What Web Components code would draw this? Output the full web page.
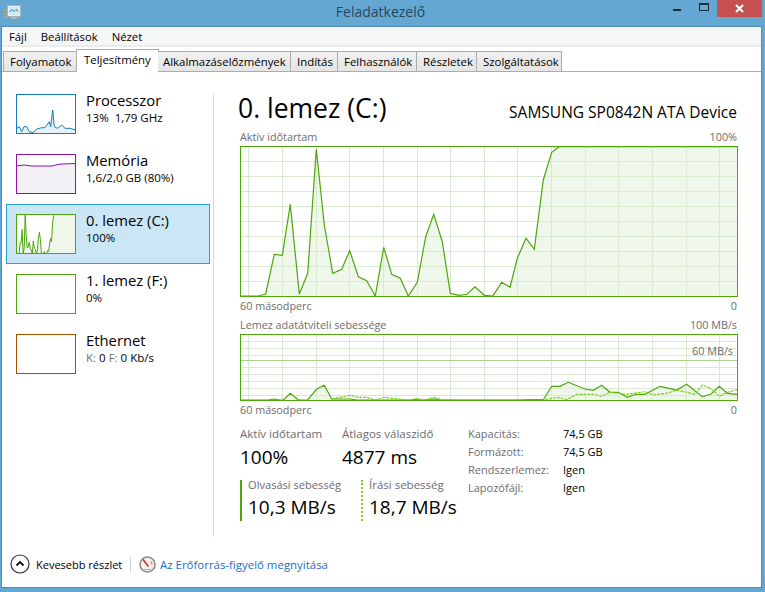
<!DOCTYPE html>
<html lang="hu">
<head>
<meta charset="utf-8">
<title>Feladatkezelő</title>
<style>
  html, body { margin: 0; height: 100%; background: #65a7d3; }
  body { font-family: "Open Sans", "Noto Sans", sans-serif; font-size: 12px; overflow: hidden; }
</style>
</head>
<body>
<tm-window>
  <tm-titlebar slot="title">Feladatkezelő</tm-titlebar>
  <tm-menu slot="menu"><span>Fájl</span><span>Beállítások</span><span>Nézet</span></tm-menu>
  <tm-tabs slot="tabs">
    <tm-tab w="74" pad="6">Folyamatok</tm-tab>
    <tm-tab w="83" pad="7" selected>Teljesítmény</tm-tab>
    <tm-tab w="133" pad="5">Alkalmazáselőzmények</tm-tab>
    <tm-tab w="47">Indítás</tm-tab>
    <tm-tab w="79">Felhasználók</tm-tab>
    <tm-tab w="60">Részletek</tm-tab>
    <tm-tab w="85">Szolgáltatások</tm-tab>
  </tm-tabs>
  <tm-sidebar slot="side">
    <tm-res kind="cpu" name="Processzor">13%&nbsp; 1,79 GHz</tm-res>
    <tm-res kind="mem" name="Memória">1,6/2,0 GB (80%)</tm-res>
    <tm-res kind="disk" name="0. lemez (C:)" selected>100%</tm-res>
    <tm-res kind="empty" name="1. lemez (F:)">0%</tm-res>
    <tm-res kind="net" name="Ethernet"><span style="color:#707070">K:</span> 0 <span style="color:#707070">F:</span> 0 Kb/s</tm-res>
  </tm-sidebar>
  <tm-detail slot="main"></tm-detail>
  <tm-footer slot="foot"></tm-footer>
</tm-window>

<script>
// chart data, in px of the big charts (497 wide)
const ACTIVE = [[0,150],[18.3,150],[25.7,148],[34.3,108.3],[42.3,109.3],[50.3,58.3],[59.3,148],[67.7,127.3],[76.3,3.3],[84.3,79],[92.7,127.3],[101.7,123.3],[109.7,104.7],[118.3,130.7],[126.7,134.7],[135.3,150],[143.7,101.3],[151.7,128.3],[160.3,132.3],[168.3,150],[177.3,136.3],[185.7,90.7],[193.7,68.3],[202.3,95.7],[210.3,147.3],[219,149.3],[227,148.3],[235,140.7],[244.3,149.3],[252.7,150],[261.7,136.3],[270,141.3],[277.3,112.3],[286,92.3],[294.3,103.3],[303.3,34],[311.7,6.3],[319.3,0.7],[497,0.7]];
const READ = [[0,66],[28.3,66],[34.3,65],[40,66],[43.3,66],[50.3,59.3],[58.3,66],[67.7,66],[76.7,55],[84.3,51.3],[91.7,65],[110,65],[116.7,66],[170,66],[176,65.4],[182,66],[193.7,65],[200,66],[280,66],[288.3,65.7],[303.3,65.7],[311.7,52.3],[320,52.3],[328.3,48.3],[345,55],[353.3,56.3],[361.7,51.3],[370,58.3],[378.3,58.3],[387.3,63.3],[395.7,60.3],[405,60.3],[420,52.3],[436.7,56],[446.7,50.3],[462.3,62.7],[470.7,60.3],[479.3,52.3],[487.3,59.3],[497,60.3]];
const WRITE = [[91.7,65],[110,61.3],[118.3,63.3],[126.7,63.3],[135.3,66],[143.7,63.3],[158.3,65],[168.3,66],[177.3,64.7],[185,66],[193.7,63.3],[202.3,65.7],[215,65.7],[221.7,66],[303.3,66],[318.3,63.3],[326.7,65.7],[336.7,60.3],[353.3,60.3],[361.7,62.3],[370,58.3],[386.7,60.3],[405,57.7],[413.3,61],[428.3,59],[436.7,56],[455,60.3],[462.3,51.3],[470.7,54.3],[479.3,62.3],[487.3,58.3],[497,55.7]];
const CPU = [[0.7,34.3],[3.3,32.7],[5.7,37.7],[8,32.7],[10.7,32.7],[13.3,37.7],[17.3,38.7],[20.7,35],[25.7,33.7],[29,33.7],[33.3,27.7],[34.7,32.7],[36.7,16],[38.3,32.7],[41.3,34.3],[45.7,31],[49,34.3],[54,34.3],[59.3,36]];
const MEM = [[0,12],[8,11],[16,12],[36,12],[42,10.5],[46,10],[60,9.5]];
const GREEN = "#4da60c";

const line = pts => pts.map(p => p.join(",")).join(" ");
const area = (pts, h) => line([[pts[0][0], h], ...pts, [pts[pts.length - 1][0], h]]);

function grid(w, h, rows, color) {
  let d = "";
  for (let i = 0; i < 15; i++) d += `M${Math.round(8.3 + i * 33.64) + 0.5} 0V${h}`;
  for (const y of rows) d += `M0 ${y + 0.5}H${w}`;
  return `<path d="${d}" stroke="${color}" fill="none"/>`;
}

class TmWindow extends HTMLElement {
  constructor() {
    super();
    this.attachShadow({ mode: "open" });
    this.shadowRoot.innerHTML = `
      <style>
        :host { display: flex; flex-direction: column; height: 592px; box-sizing: border-box; padding: 0 3px 4px 1px; background: #65a7d3; }
        .body { flex: 1; display: flex; flex-direction: column; background: #fff; min-height: 0; border: 1px solid #4f8bb3; }
        .row { flex: 1; display: flex; min-height: 0; }
      </style>
      <slot name="title"></slot>
      <div class="body">
        <slot name="menu"></slot>
        <slot name="tabs"></slot>
        <div class="row"><slot name="side"></slot><slot name="main"></slot></div>
        <slot name="foot"></slot>
      </div>`;
  }
}

class TmTitlebar extends HTMLElement {
  constructor() {
    super();
    this.attachShadow({ mode: "open" });
    this.shadowRoot.innerHTML = `
      <style>
        :host { display: block; position: relative; height: 26px; margin: 0 -3px 0 -1px; padding-right: 4px; text-align: center; font-size: 14px; line-height: 24px; color: #27475c; }
        svg { position: absolute; }
        .close { position: absolute; left: 717px; top: 0; width: 45px; height: 17px; background: #c75050; display: flex; align-items: center; justify-content: center; }
      </style>
      <svg style="left:4px;top:5px" width="17" height="15" viewBox="0 0 17 15">
        <rect x="3.5" y="0.5" width="13" height="11" fill="#e8eef2" stroke="#a9b4ba"/>
        <rect x="5" y="2" width="10" height="8" fill="#cfe6f5"/>
        <path d="M5.5 7l2-2.5 2.5 2 2-2 2.5 2" fill="none" stroke="#2f86cc"/>
        <path d="M7 12h6v2H7z" fill="#aeb8bd"/>
        <rect x="0" y="4" width="3" height="9" fill="#9aa69c"/>
        <rect x="1" y="6" width="1" height="2" fill="#5da43a"/>
      </svg>
      <svg style="left:673px;top:9px" width="8" height="2"><rect width="8" height="2" fill="#1d2c36"/></svg>
      <svg style="left:699px;top:3px" width="10" height="8"><rect x="0.5" y="0.5" width="9" height="7" fill="none" stroke="#1d2c36"/><rect x="0" y="0" width="10" height="2" fill="#1d2c36"/></svg>
      <div class="close"><svg width="9" height="9" style="position:static"><path d="M1 1l7 7M8 1L1 8" stroke="#fff" stroke-width="2"/></svg></div>
      <slot></slot>`;
  }
}

class TmMenu extends HTMLElement {
  constructor() {
    super();
    this.attachShadow({ mode: "open" });
    this.shadowRoot.innerHTML = `
      <style>
        :host { display: flex; gap: 14px; height: 18px; padding: 0 0 0 7px; background: #f5f6f7; border-bottom: 2px solid #ececec; line-height: 19px; color: #000; }
        ::slotted(span) { font-size: 11.3px; }
      </style>
      <slot></slot>`;
  }
}

class TmTabs extends HTMLElement {
  constructor() {
    super();
    this.attachShadow({ mode: "open" });
    this.shadowRoot.innerHTML = `
      <style>
        :host { display: flex; align-items: flex-end; height: 25px; box-sizing: border-box; padding-left: 1px; border-bottom: 1px solid #acacac; }
      </style>
      <slot></slot>`;
  }
}

class TmTab extends HTMLElement {
  constructor() {
    super();
    const on = this.hasAttribute("selected");
    const pad = this.getAttribute("pad") || 6;
    this.attachShadow({ mode: "open" });
    this.shadowRoot.innerHTML = `
      <style>
        :host { display: block; box-sizing: border-box; width: ${this.getAttribute("w")}px;
          height: ${on ? 23 : 20}px; margin-bottom: ${on ? -1 : 0}px; position: relative; margin-left: ${on ? -1 : 0}px; margin-right: ${on ? -1 : 0}px;
          border: 1px solid #acacac; border-bottom: 0; ${on ? "" : "border-left-width: 0;"}
          background: ${on ? "#fff" : "linear-gradient(#f0f0f0, #e5e5e5)"};
          padding-left: ${pad}px; line-height: ${on ? 19 : 20}px; font-size: 11.4px; white-space: nowrap; color: #000; }
        :host(:first-child) { border-left-width: 1px; }
      </style>
      <slot></slot>`;
  }
}

class TmSidebar extends HTMLElement {
  constructor() {
    super();
    this.attachShadow({ mode: "open" });
    this.shadowRoot.innerHTML = `
      <style>
        :host { display: flex; box-sizing: border-box; width: 212px; }
        .list { width: 211px; box-sizing: border-box; padding: 12px 0 0 4px; }
        .rule { width: 1px; margin: 22px 0 2px; background: #d9d9d9; }
      </style>
      <div class="list"><slot></slot></div>
      <div class="rule"></div>`;
  }
}

class TmRes extends HTMLElement {
  constructor() {
    super();
    const kind = this.getAttribute("kind");
    const on = this.hasAttribute("selected");
    const colors = { cpu: "#117dbb", mem: "#8b12ae", disk: GREEN, empty: GREEN, net: "#a74f01" };
    const c = colors[kind];
    let inner = "";
    if (kind === "cpu") inner = `<polygon points="${area(CPU, 40)}" fill="#e6f1f8"/><polyline points="${line(CPU)}" fill="none" stroke="${c}"/>`;
    if (kind === "mem") inner = `<polygon points="${area(MEM, 40)}" fill="#f2eff5"/><polyline points="${line(MEM)}" fill="none" stroke="${c}"/>`;
    if (kind === "disk") {
      const s = ACTIVE.map(p => [+(p[0] * 0.1207).toFixed(1), +(p[1] * 0.2667).toFixed(1)]);
      inner = `<polygon points="${area(s, 40)}" fill="#eff6ea"/><polyline points="${line(s)}" fill="none" stroke="${c}" stroke-linejoin="round"/>`;
    }
    this.attachShadow({ mode: "open" });
    this.shadowRoot.innerHTML = `
      <style>
        :host { display: flex; box-sizing: border-box; width: 204px; height: 60px; padding: ${on ? "9px" : "10px"} 0 0 ${on ? "9px" : "10px"};
          ${on ? "background: #cbe6f5; border: 1px solid #26a0da;" : ""} color: #000; }
        .thumb { width: 60px; height: 40px; box-sizing: border-box; border: 1px solid ${c}; background: #fff; flex: none; overflow: hidden; }
        svg { display: block; margin: -1px; }
        .txt { margin-left: 10px; }
        .name { font-size: 14.8px; line-height: 17px; margin-top: -2px; }
        .sub { font-size: 11.5px; line-height: 15px; margin-top: 1px; white-space: nowrap; }
      </style>
      <div class="thumb"><svg width="60" height="40" viewBox="0 0 60 40">${inner}</svg></div>
      <div class="txt"><div class="name">${this.getAttribute("name")}</div><div class="sub"><slot></slot></div></div>`;
  }
}

class TmChart extends HTMLElement {
  constructor() {
    super();
    const h = +this.getAttribute("h");
    const big = h > 100;
    let body;
    if (big) {
      const rows = [15, 30, 45, 60, 75, 90, 105, 120, 135];
      body = `<polygon points="${area(ACTIVE, h)}" fill="#eff6ea"/>` + grid(497, h, rows, "#d9ead0") +
        `<polyline points="${line(ACTIVE)}" fill="none" stroke="${GREEN}" stroke-width="1.2"/>`;
    } else {
      const rows = [7, 14, 21, 33, 40, 47, 54, 61];
      body = `<polygon points="${area(READ, h)}" fill="#eff6ea"/>` + grid(497, h, rows, "#d9ead0") +
        `<path d="M0 26.5H497" stroke="#a9d48c"/>` +
        `<polyline points="${line(READ)}" fill="none" stroke="${GREEN}" stroke-width="1.2"/>` +
        `<polyline points="${line(WRITE)}" fill="none" stroke="#7fd020" stroke-width="1.2" stroke-dasharray="3 1"/>`;
    }
    this.attachShadow({ mode: "open" });
    this.shadowRoot.innerHTML = `
      <style>
        :host { display: block; position: relative; width: 498px; height: ${h + 1}px; }
        svg { display: block; width: 498px; height: ${h + 1}px; }
        .mark { position: absolute; right: 5px; top: 9px; font-size: 10.8px; color: #6d6d6d; }
      </style>
      <svg viewBox="0 0 498 ${h + 1}">${body}<rect x="0.5" y="0.5" width="497" height="${h}" fill="none" stroke="${GREEN}"/></svg>
      <div class="mark"><slot></slot></div>`;
  }
}

class TmLabels extends HTMLElement {
  constructor() {
    super();
    this.attachShadow({ mode: "open" });
    this.shadowRoot.innerHTML = `
      <style>
        :host { display: flex; justify-content: space-between; width: 497px; height: 15px; line-height: 15px; font-size: 10.8px; color: #6d6d6d; }
        :host(.above) { line-height: 11px; }
      </style>
      <slot></slot>`;
  }
}

class TmStat extends HTMLElement {
  constructor() {
    super();
    this.attachShadow({ mode: "open" });
    this.shadowRoot.innerHTML = `
      <style>
        :host { display: block; }
        .l { font-size: var(--label-size, 11.5px); line-height: 16px; color: #6d6d6d; white-space: nowrap; }
        .v { font-size: 19px; line-height: 25px; margin-top: var(--value-gap, 3px); color: #000; white-space: nowrap; }
      </style>
      <div class="l">${this.getAttribute("label")}</div>
      <div class="v"><slot></slot></div>`;
  }
}

class TmDetail extends HTMLElement {
  constructor() {
    super();
    this.attachShadow({ mode: "open" });
    this.shadowRoot.innerHTML = `
      <style>
        :host { display: block; box-sizing: border-box; width: 540px; padding: 20px 0 0 26px; color: #000; }
        header { display: flex; justify-content: space-between; align-items: baseline; width: 497px; height: 39px; }
        h1 { font-size: 26.5px; font-weight: 400; margin: 0 0 0 -2px; line-height: 32px; }
        .dev { font-size: 15.5px; }
        .below { margin-top: 1px; }
        .gap { height: 6px; }
        .stats { display: flex; margin-top: 9px; }
        .left { width: 228px; }
        .top { display: flex; }
        .top tm-stat:first-child { width: 102px; }
        .speeds { display: flex; margin-top: 10px; --value-gap: 2px; }
        .speeds tm-stat { margin-top: -3px; }
        .sp { box-sizing: border-box; height: 41px; padding-left: 6px; }
        .sp.r { width: 121px; border-left: 2px solid ${GREEN}; --label-size: 11.1px; }
        .sp.w { border-left: 2px dotted #7fd020; }
        dl { display: grid; grid-template-columns: 95px auto; grid-auto-rows: 18px; margin: 0; font-size: 11px; line-height: 16px; }
        dt { color: #6d6d6d; }
        dd { margin: 0; }
      </style>
      <header><h1>0. lemez (C:)</h1><div class="dev">SAMSUNG SP0842N ATA Device</div></header>
      <tm-labels class="above"><span>Aktív időtartam</span><span>100%</span></tm-labels>
      <tm-chart h="150"></tm-chart>
      <tm-labels class="below"><span>60 másodperc</span><span>0</span></tm-labels>
      <div class="gap"></div>
      <tm-labels class="above"><span>Lemez adatátviteli sebessége</span><span>100 MB/s</span></tm-labels>
      <tm-chart h="66">60 MB/s</tm-chart>
      <tm-labels class="below"><span>60 másodperc</span><span>0</span></tm-labels>
      <div class="stats">
        <div class="left">
          <div class="top">
            <tm-stat label="Aktív időtartam">100%</tm-stat>
            <tm-stat label="Átlagos válaszidő">4877 ms</tm-stat>
          </div>
          <div class="speeds">
            <div class="sp r"><tm-stat label="Olvasási sebesség">10,3 MB/s</tm-stat></div>
            <div class="sp w"><tm-stat label="Írási sebesség">18,7 MB/s</tm-stat></div>
          </div>
        </div>
        <dl>
          <dt>Kapacitás:</dt><dd>74,5 GB</dd>
          <dt>Formázott:</dt><dd>74,5 GB</dd>
          <dt>Rendszerlemez:</dt><dd>Igen</dd>
          <dt>Lapozófájl:</dt><dd>Igen</dd>
        </dl>
      </div>`;
  }
}

class TmFooter extends HTMLElement {
  constructor() {
    super();
    this.attachShadow({ mode: "open" });
    this.shadowRoot.innerHTML = `
      <style>
        :host { display: flex; align-items: center; height: 48px; padding: 2px 0 0 8px; box-sizing: border-box; font-size: 11px; color: #000; }
        .sep { width: 1px; height: 15px; background: #d0d0d0; margin: 0 8px; }
        a { color: #1a6fc9; text-decoration: none; margin-left: 4px; font-size: 11.45px; }
        span { margin-left: 6px; width: 86px; white-space: nowrap; }
      </style>
      <svg width="20" height="20" viewBox="0 0 20 20">
        <circle cx="10" cy="10" r="9" fill="#fff" stroke="#333" stroke-width="1.2"/>
        <path d="M6.5 11.5L10 8l3.5 3.5" fill="none" stroke="#111" stroke-width="1.8"/>
      </svg>
      <span>Kevesebb részlet</span>
      <div class="sep"></div>
      <svg width="17" height="17" viewBox="0 0 17 17">
        <circle cx="8.5" cy="8.5" r="7.5" fill="#f4f1ec" stroke="#8b8b85" stroke-width="1.6"/>
        <path d="M4 3.5l5.5 7" stroke="#c63a2a" stroke-width="1.6"/>
        <path d="M12 5.5l1 3" stroke="#d88a3a" stroke-width="1.2"/>
        <path d="M5 13.5h7" stroke="#b8b2a8"/>
      </svg>
      <a href="#">Az Erőforrás-figyelő megnyitása</a>`;
  }
}

customElements.define("tm-window", TmWindow);
customElements.define("tm-titlebar", TmTitlebar);
customElements.define("tm-menu", TmMenu);
customElements.define("tm-tabs", TmTabs);
customElements.define("tm-tab", TmTab);
customElements.define("tm-sidebar", TmSidebar);
customElements.define("tm-res", TmRes);
customElements.define("tm-chart", TmChart);
customElements.define("tm-labels", TmLabels);
customElements.define("tm-stat", TmStat);
customElements.define("tm-detail", TmDetail);
customElements.define("tm-footer", TmFooter);
</script>
</body>
</html>
